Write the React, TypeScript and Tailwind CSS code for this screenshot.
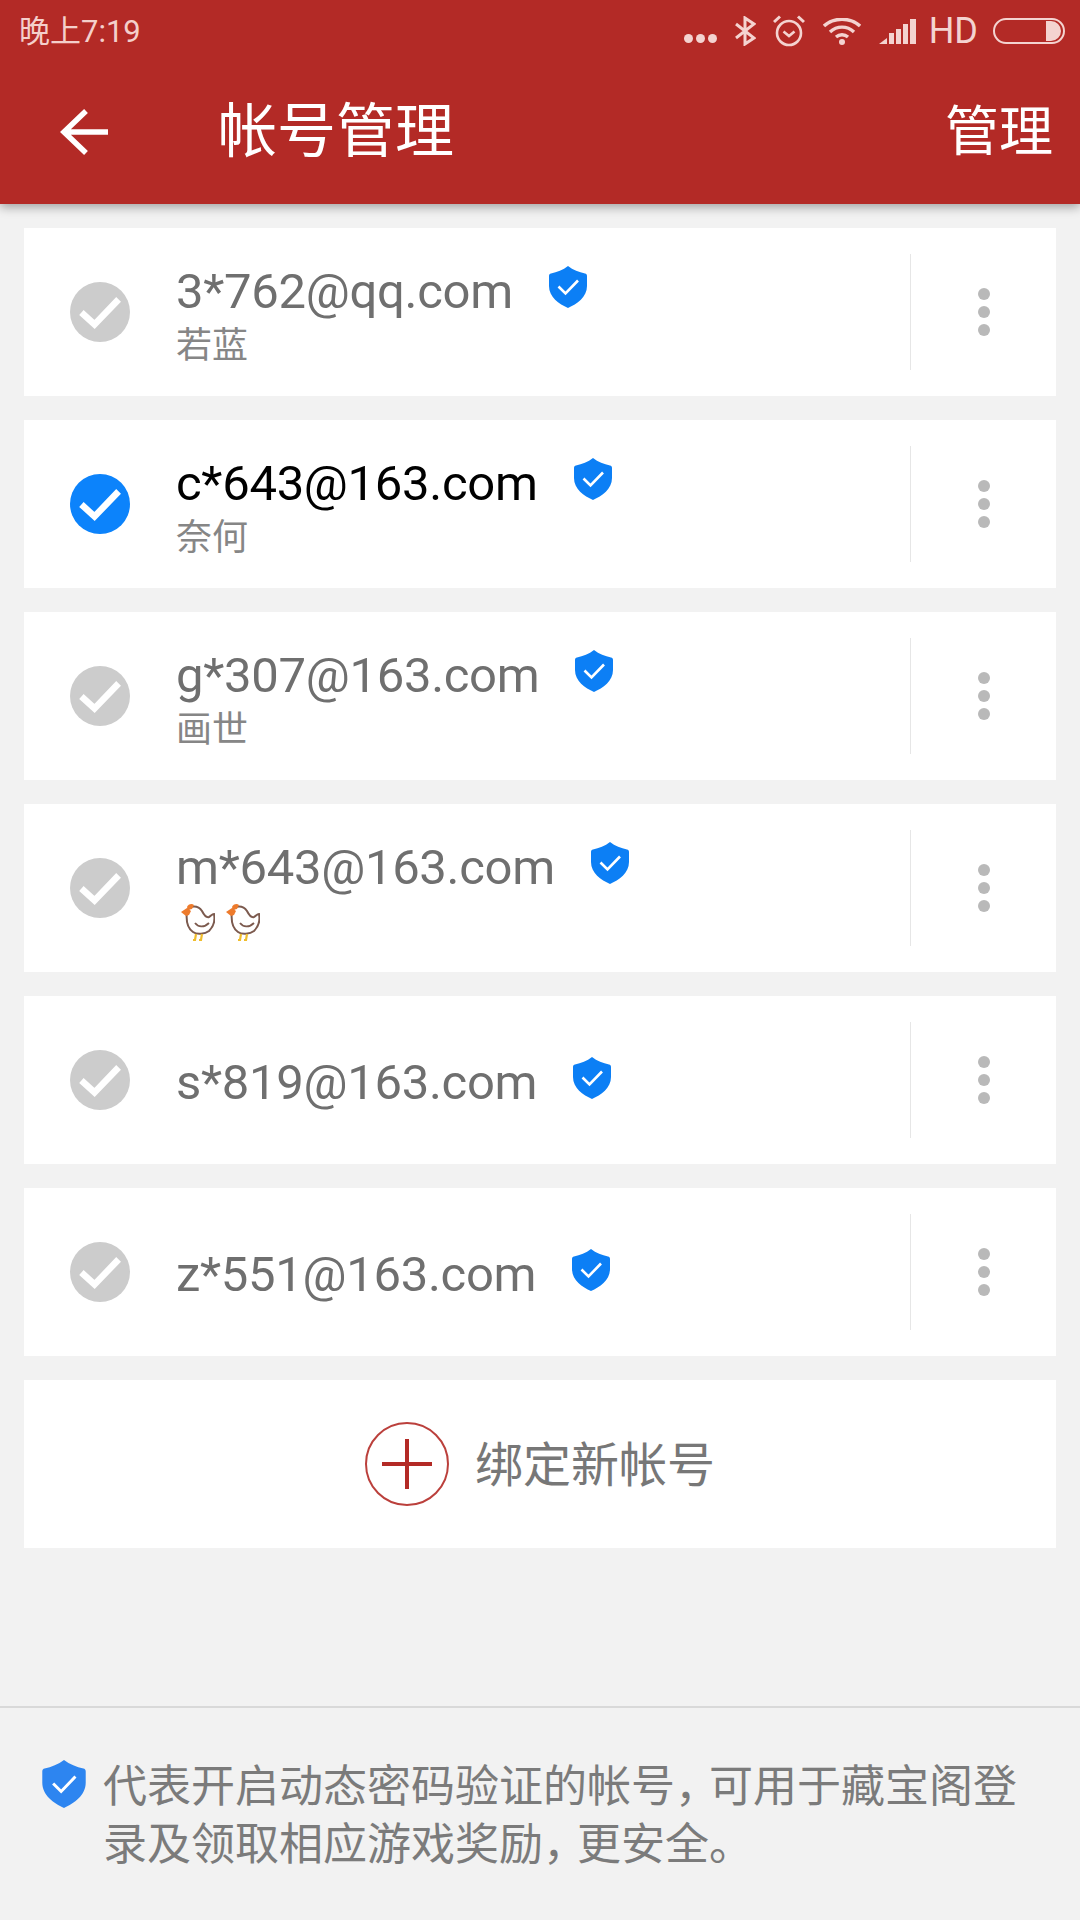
const accounts = [
  { email: '3*762@qq.com', nick: '若蓝' },
  { email: 'c*643@163.com', nick: '奈何', active: true },
  { email: 'g*307@163.com', nick: '画世' },
  { email: 'm*643@163.com', chickens: true },
  { email: 's*819@163.com' },
  { email: 'z*551@163.com' },
];

function Shield({ className }: { className: string }) {
  return (
    <svg viewBox="0 0 38 42" className={className}>
      <path
        d="M19 0C24 4 30 6 36 7.5C37.2 7.8 38 8.6 38 10V20C38 31 28 38 19 42C10 38 0 31 0 20V10C0 8.6 .8 7.8 2 7.5C8 6 14 4 19 0Z"
        fill="currentColor"
      />
      <path d="M9.500 20.500L16.500 27.500L29 14.500" fill="none" stroke="#fff" strokeWidth="2.6" />
    </svg>
  );
}

function Chicken() {
  return (
    <svg viewBox="0 0 34 38" className="w-[34px] h-[38px]">
      <path
        d="M6 8C9 2 17 2 21 8C23 12 25 15 28 14C30 13 31 11 33 11C34 16 33 23 28 28C24 31 16 32 12 29C6 25 5 16 6 8Z"
        fill="#fff"
        stroke="#7c5a4e"
        strokeWidth="2"
      />
      <path d="M14 20C17 24 23 25 28 20" fill="none" stroke="#7c5a4e" strokeWidth="1.8" />
      <path d="M6 4C7 1 11 0 13 2L11 6L7 7Z" fill="#ee7b2c" />
      <path d="M0 9L6 5L10 8L8 12L5 13Z" fill="#ee7b2c" />
      <path d="M15 31L14 37H12M21 31L20 37H18" fill="none" stroke="#f0bd2d" strokeWidth="2.2" />
    </svg>
  );
}

function StatusIcons() {
  return (
    <div className="flex items-center text-[#f4d3d0]">
      <div className="flex gap-[3px] mt-[14px]">
        <span className="w-[9px] h-[9px] rounded-full bg-[#f4d3d0]" />
        <span className="w-[9px] h-[9px] rounded-full bg-[#f4d3d0]" />
        <span className="w-[9px] h-[9px] rounded-full bg-[#f4d3d0]" />
      </div>
      <svg viewBox="0 0 21 30" className="w-[21px] h-[30px] ml-[18px]">
        <path d="M1 8L19 22L10 28V2L19 8L1 22" fill="none" stroke="currentColor" strokeWidth="3" />
      </svg>
      <svg viewBox="0 0 32 32" className="w-[32px] h-[32px] ml-[17px]">
        <circle cx="16" cy="18" r="12" fill="none" stroke="currentColor" strokeWidth="2.6" />
        <path d="M10.5 16.5L16 21L21.5 16.5" fill="none" stroke="currentColor" strokeWidth="2.6" />
        <path d="M1 7L7 1.5M31 7L25 1.5" fill="none" stroke="currentColor" strokeWidth="3" />
      </svg>
      <svg viewBox="0 0 38 27" className="w-[38px] h-[27px] ml-[18px]">
        <path d="M1 8C11 -1 27 -1 37 8" fill="none" stroke="currentColor" strokeWidth="3.4" />
        <path d="M7 14C14 7.5 24 7.5 31 14" fill="none" stroke="currentColor" strokeWidth="3.4" />
        <path d="M13 19C16.500 16 21.500 16 25 19" fill="none" stroke="currentColor" strokeWidth="3.4" />
        <circle cx="19" cy="24" r="3" fill="currentColor" />
      </svg>
      <svg viewBox="0 0 37 25" className="w-[37px] h-[25px] ml-[18px]">
        <path d="M0 25L8 19V25Z" fill="currentColor" />
        <rect x="10" y="14" width="5" height="11" fill="currentColor" />
        <rect x="17" y="10" width="5" height="15" fill="currentColor" />
        <rect x="24" y="5" width="5" height="20" fill="currentColor" />
        <rect x="31" y="0" width="6" height="25" fill="currentColor" />
      </svg>
      <span className="ml-[13px] text-[36px] leading-none">HD</span>
      <div className="ml-[15px] w-[72px] h-[26px] rounded-full border-2 border-[#f4d3d0] flex justify-end items-center pr-[2px]">
        <span className="w-[15px] h-[20px] rounded-r-full bg-[#f4d3d0]" />
      </div>
    </div>
  );
}

function AccountRow({ account }: { account: (typeof accounts)[number] }) {
  const hasSub = account.nick || account.chickens;
  return (
    <div className="h-[168px] bg-white flex items-center pl-[46px] pr-[66px]">
      <div
        className={`w-[60px] h-[60px] rounded-full flex items-center justify-center shrink-0 ${
          account.active ? 'bg-[#0c83fb]' : 'bg-[#cccccc]'
        }`}
      >
        <svg viewBox="0 0 40 32" className="w-[44px] h-[35px]">
          <path d="M3 16L15 27L37 4" fill="none" stroke="#fff" strokeWidth="6" />
        </svg>
      </div>
      <div className={`ml-[46px] flex-1 flex flex-col justify-center ${hasSub ? 'pt-[7px]' : 'pt-[5px]'}`}>
        <div className={`flex items-center ${hasSub ? 'h-[60px]' : ''}`}>
          <span
            className={`text-[49px] tracking-[-0.3px] leading-[60px] ${
              account.active ? 'text-black' : 'text-[#6f6f6f]'
            }`}
          >
            {account.email}
          </span>
          <Shield className="w-[38px] h-[42px] ml-[36px] mb-[10px] text-[#0c7ff5]" />
        </div>
        {account.nick && <div className="text-[36px] leading-[48px] text-[#868686]">{account.nick}</div>}
        {account.chickens && (
          <div className="flex gap-[11px] h-[48px] items-center pl-[5px]">
            <Chicken />
            <Chicken />
          </div>
        )}
      </div>
      <div className="w-[1px] h-[116px] bg-[#e6e6e6]" />
      <div className="ml-[67px] flex flex-col gap-[6px]">
        <span className="w-[12px] h-[12px] rounded-full bg-[#b9b9b9]" />
        <span className="w-[12px] h-[12px] rounded-full bg-[#b9b9b9]" />
        <span className="w-[12px] h-[12px] rounded-full bg-[#b9b9b9]" />
      </div>
    </div>
  );
}

export default function App() {
  return (
    <div className="w-[1080px] h-[1920px] bg-[#f2f2f2] flex flex-col overflow-hidden font-[Roboto,'Noto_Sans_CJK_SC',sans-serif]">
      <header className="h-[204px] bg-[#b32a26] shadow-[0_3px_10px_rgba(0,0,0,0.35)] relative z-10 shrink-0">
        <div className="h-[62px] pl-[19px] pr-[15px] flex items-center justify-between">
          <span className="text-[31px] leading-none text-[#f4cfcb]">晚上7:19</span>
          <StatusIcons />
        </div>
        <div className="h-[142px] flex items-center pb-[2px]">
          <svg viewBox="0 0 48 48" className="w-[48px] h-[48px] ml-[60px]">
            <path d="M48 24H4M26 3L4 24L26 45" fill="none" stroke="#fff" strokeWidth="5.5" />
          </svg>
          <h1 className="ml-[110px] text-[59px] font-normal text-white flex-1">帐号管理</h1>
          <button className="text-[54px] text-white mr-[27px]">管理</button>
        </div>
      </header>

      <div className="mx-[24px] mt-[24px] flex flex-col gap-[24px]">
        {accounts.map((account) => (
          <AccountRow key={account.email} account={account} />
        ))}
        <button className="h-[168px] bg-white flex items-center justify-center">
          <span className="w-[84px] h-[84px] rounded-full border-2 border-[#bb403c] relative">
            <span className="absolute left-[15px] top-[38px] w-[50px] h-[4px] bg-[#b32a26]" />
            <span className="absolute left-[38px] top-[15px] w-[4px] h-[50px] bg-[#b32a26]" />
          </span>
          <span className="ml-[26px] pt-[4px] text-[48px] text-[#777777]">绑定新帐号</span>
        </button>
      </div>

      <div className="flex-1" />

      <footer className="h-[214px] border-t-2 border-[#d9d9d9] pl-[42px] pt-[50px] flex shrink-0">
        <Shield className="w-[44px] h-[48px] mt-[2px] text-[#2d85f0] shrink-0" />
        <p className="ml-[17px] text-[44px] leading-[58px] text-[#7b7b7b]">
          代表开启动态密码验证的帐号<span className="tracking-[-10px]">，</span>可用于藏宝阁登
          <br />
          录及领取相应游戏奖励<span className="tracking-[-10px]">，</span>更安全。
        </p>
      </footer>
    </div>
  );
}
